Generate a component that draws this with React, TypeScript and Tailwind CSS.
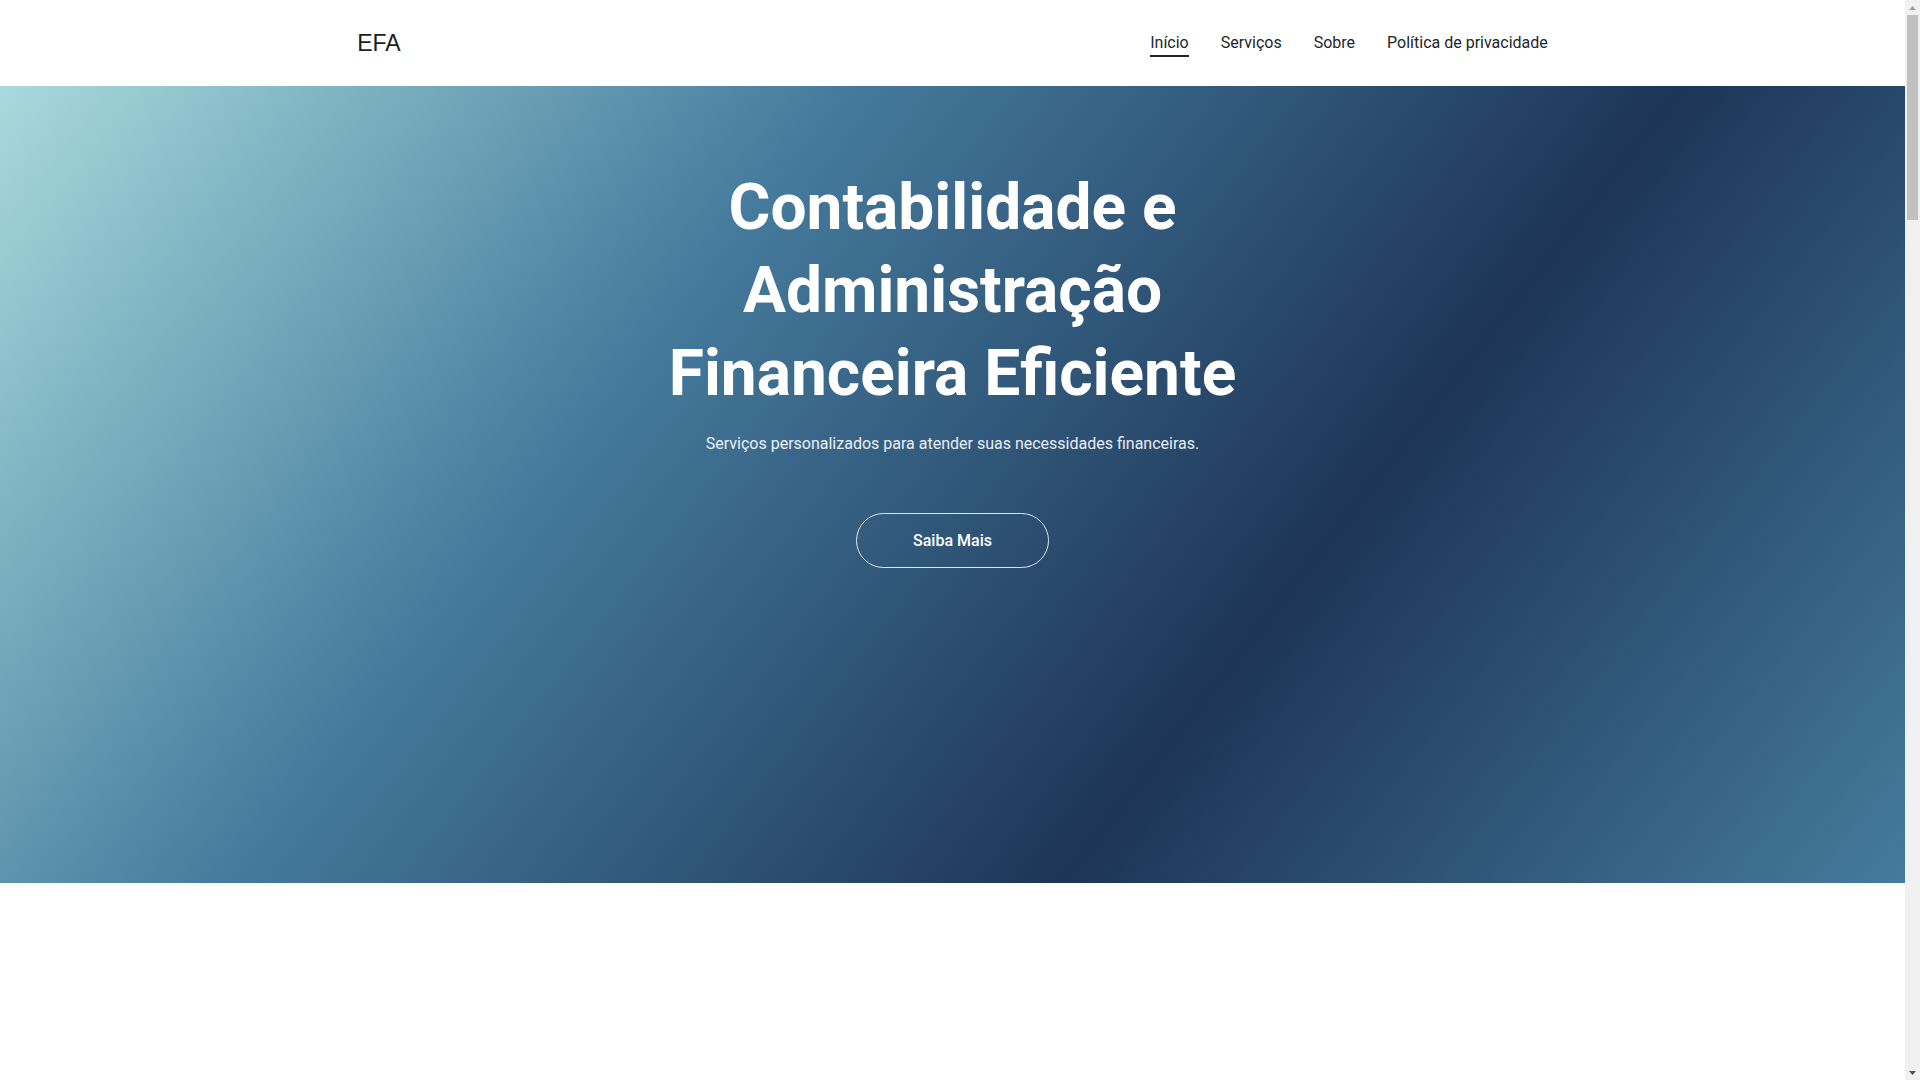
const navLinks = [
  { label: "Início", active: true },
  { label: "Serviços", active: false },
  { label: "Sobre", active: false },
  { label: "Política de privacidade", active: false },
];

const ScrollBar = () => (
  <div className="sticky top-0 flex h-screen w-[15px] shrink-0 flex-col bg-[#f1f1f1]">
    <div className="flex h-[15px] items-center justify-center">
      <svg width="7" height="4" viewBox="0 0 7 4">
        <polygon points="3.5,0 7,4 0,4" fill="#a3a3a3" />
      </svg>
    </div>
    <div className="mx-[2px] h-[205px] bg-[#c1c1c1]"></div>
    <div className="flex-1"></div>
    <div className="flex h-[15px] items-center justify-center">
      <svg width="7" height="4" viewBox="0 0 7 4">
        <polygon points="0,0 7,0 3.5,4" fill="#505050" />
      </svg>
    </div>
  </div>
);

const App = () => {
  return (
    <div className="flex bg-white font-['Roboto',sans-serif]">
      <div className="min-w-0 flex-1">
        {/* header */}
        <header className="h-[86px] bg-white">
          <div className="mx-auto flex h-full w-[62.5%] items-center justify-between">
            <a
              href="#"
              className="font-['Liberation_Sans',Arial,sans-serif] text-[23px] leading-none text-[#1a1d21]"
            >
              EFA
            </a>
            <nav className="flex items-center gap-8 pt-[2px]">
              {navLinks.map((link) => (
                <a
                  key={link.label}
                  href="#"
                  className={`border-b-2 text-base leading-6 text-[#212529] ${
                    link.active ? "border-[#212529]" : "border-transparent"
                  }`}
                >
                  {link.label}
                </a>
              ))}
            </nav>
          </div>
        </header>

        {/* hero */}
        <section className="flex h-[797px] flex-col items-center bg-[linear-gradient(128deg,#a8dadc_0%,#457b9d_33.3%,#1d3557_66.6%,#457b9d_100%)] pt-[80px] text-center">
          <h1 className="max-w-[640px] text-[64px] font-bold leading-[83px] text-white">
            Contabilidade e Administração Financeira Eficiente
          </h1>
          <p className="mt-[17px] text-base leading-6 text-white/90">
            Serviços personalizados para atender suas necessidades financeiras.
          </p>
          <button className="mt-[57px] flex h-[55px] w-[193px] items-center justify-center rounded-full border border-white/85 text-base font-medium text-white">
            Saiba Mais
          </button>
        </section>

        {/* rest of page */}
        <div className="h-[4647px] bg-white"></div>
      </div>
      <ScrollBar />
    </div>
  );
};

export default App;
